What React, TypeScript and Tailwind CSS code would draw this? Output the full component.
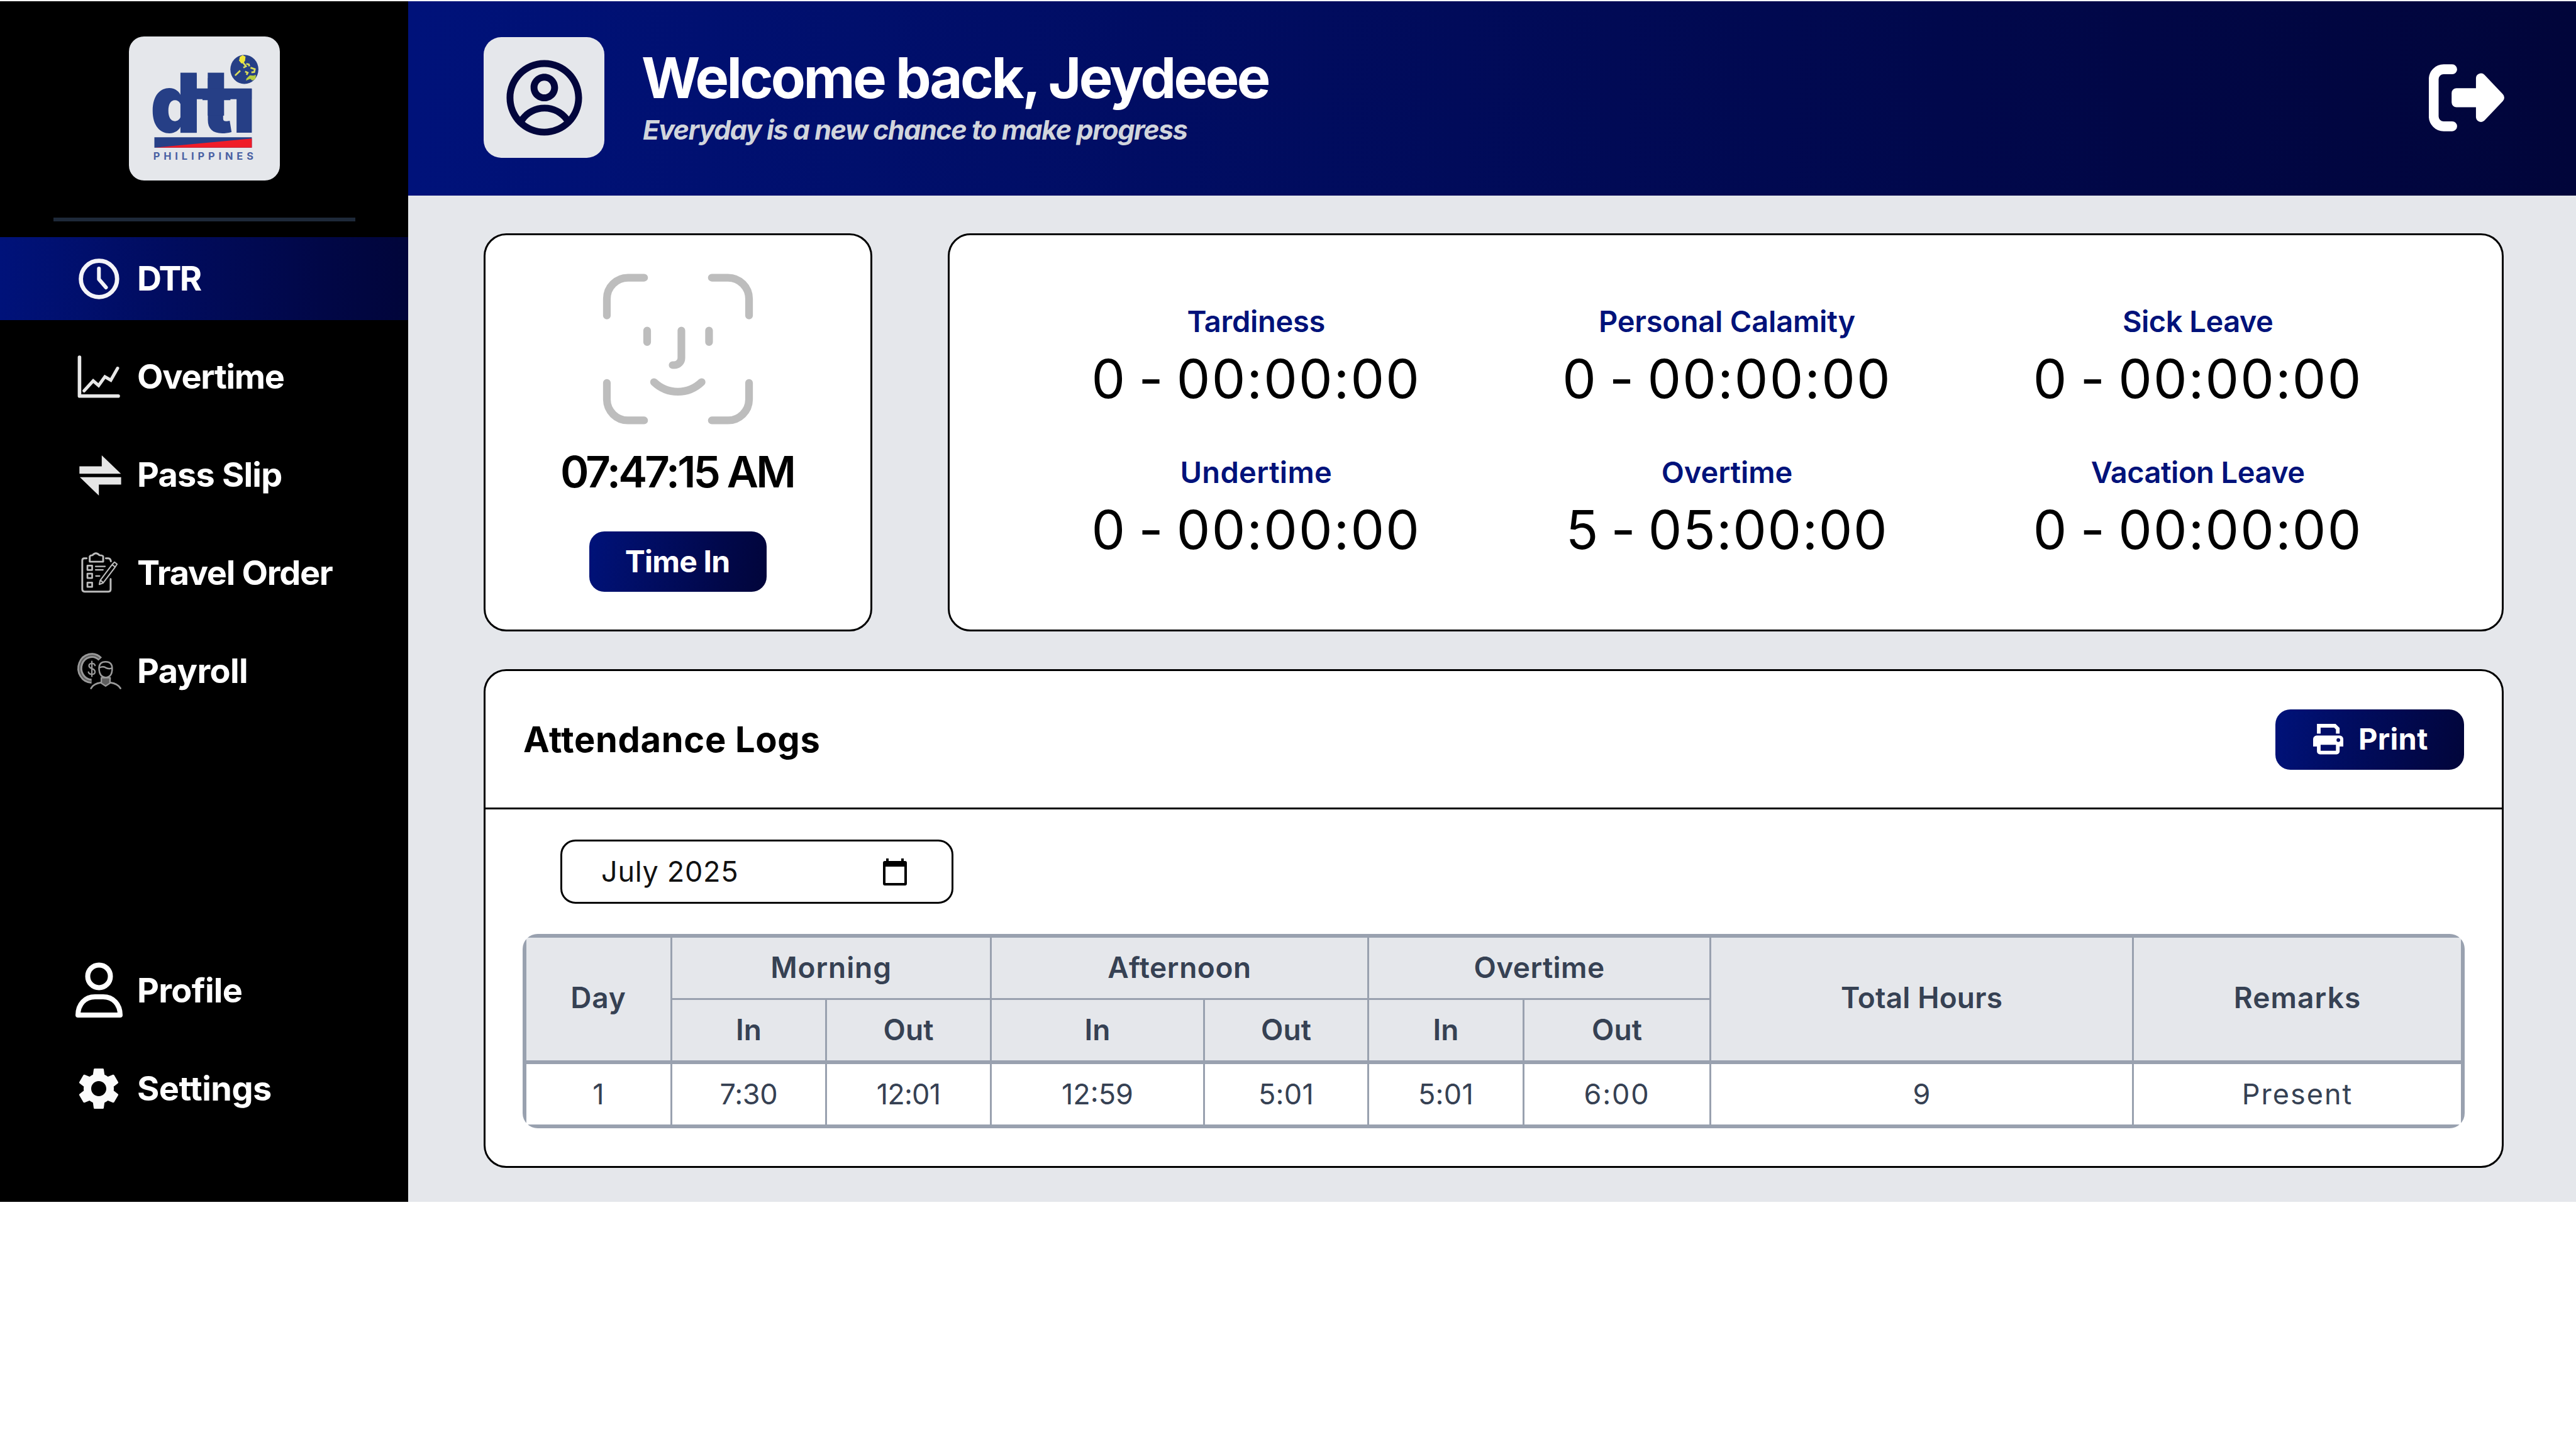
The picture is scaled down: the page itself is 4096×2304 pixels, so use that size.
import React from "react";
import { CgProfile } from "react-icons/cg";
import { MdSettings } from "react-icons/md";

function Logo() {
  return (
    <svg viewBox="0 17 1055 1006" preserveAspectRatio="none" className="h-[229px] w-[240px]" aria-label="DTI Philippines">
      <g fill="#263f86" className="font-[Inter] font-black">
        <text x="150" y="690" fontSize="564" textLength="736" lengthAdjust="spacingAndGlyphs">dti</text>
        <rect x="360" y="270" width="114" height="420" />
        <rect x="551" y="270" width="114" height="300" />
        <rect x="470" y="380" width="388" height="75" />
      </g>
      <ellipse cx="807" cy="247" rx="102" ry="106" fill="#e5e7eb" />
      <ellipse cx="807" cy="247" rx="98" ry="102" fill="#263f86" />
      <path d="M775 160L795 148L815 158L812 185L800 205L785 205L770 185Z" fill="#f0e63a" />
      <path d="M798 200L818 225L800 235M820 208L838 212L842 225M742 290L778 255M850 235L880 245L876 265L856 268M812 262L830 270L822 285" fill="none" stroke="#d9dc5a" strokeWidth="12" />
      <path d="M822 310L845 288L870 290L888 285L884 315L862 324L848 312L818 326Z" fill="#b9cf3f" />
      <rect x="178" y="721" width="681" height="73" fill="#263f86" />
      <path d="M178 794L859 730V794Z" fill="#f01c28" />
      <text x="170" y="878" fontSize="72" textLength="700" lengthAdjust="spacing" fill="#4a61a3" className="font-[Inter] font-bold">PHILIPPINES</text>
    </svg>
  );
}

function IconFrame({ children }: { children: React.ReactNode }) {
  return (
    <svg viewBox="0 0 78 90" className="h-[90px] w-[78px] shrink-0 overflow-visible" fill="none">
      {children}
    </svg>
  );
}

const ClockIcon = () => (
  <IconFrame>
    <g stroke="#f3f3f8" strokeLinecap="round" strokeLinejoin="round">
      <circle cx="39.4" cy="45.5" r="28.8" strokeWidth="6.8" />
      <path d="M39.3 29V46L50.5 59" strokeWidth="6" />
    </g>
  </IconFrame>
);

const ChartIcon = () => (
  <IconFrame>
    <path d="M8.4 14V75.8H70" stroke="#e8e8e8" strokeWidth="5.6" strokeLinecap="round" strokeLinejoin="round" />
    <path d="M15.6 67.5L30.2 51.5L38.8 59L48.8 45L58.2 50.5L69 31.5" stroke="#e8e8e8" strokeWidth="5" strokeLinecap="round" />
  </IconFrame>
);

const SwapIcon = () => (
  <IconFrame>
    <path d="M8.3 31.5H43.8V14L74.3 43.2H8.3ZM9 48.8H74.6V60.5H39.2V78Z" fill="#e6e6e6" />
  </IconFrame>
);

const TravelIcon = () => (
  <IconFrame>
    <g transform="translate(-8.8 -6.8) scale(.2276)" stroke="#bdbdbd" strokeWidth="13" strokeLinecap="round" strokeLinejoin="round">
      <path d="M125 125H110Q95 125 95 140V342Q95 358 111 358H278Q293 358 293 343V270M260 125H276Q292 125 295 146" />
      <path d="M147 149V113Q150 104 166 104Q190 76 215 104Q240 104 241 114V149Z" />
      <rect x="131" y="177" width="33" height="30" strokeWidth="12" />
      <rect x="131" y="233" width="33" height="30" strokeWidth="12" />
      <rect x="131" y="295" width="33" height="30" strokeWidth="12" />
      <path d="M188 182H254M188 206H240M190 249H216" strokeWidth="10" />
      <path d="M303 170L320 152L338 166L325 186M303 170L220 280L214 308L240 298L325 186M303 170L325 186M226 282L240 294" strokeWidth="9" />
    </g>
  </IconFrame>
);

const PayrollIcon = () => (
  <IconFrame>
    <g transform="translate(-8.8 -162.8) scale(.2276)" stroke="#9a9a9a" strokeLinecap="round" strokeLinejoin="round">
      <path d="M220 829A84 90 0 1 0 160 984" strokeWidth="34" strokeLinecap="butt" />
      <path d="M214 824A84 90 0 1 0 158 984" strokeWidth="9" stroke="#5e5e5e" strokeLinecap="butt" />
      <path d="M184 874Q180 860 162 860Q140 861 142 878Q144 890 162 896Q184 903 184 920Q182 936 162 936Q142 935 138 920M162 846V950" strokeWidth="10" />
      <path d="M212 895Q212 848 258 848Q304 848 304 895Q304 955 258 958Q214 955 212 895ZM212 890Q240 878 256 888Q280 902 304 892" strokeWidth="11" fill="#000" />
      <path d="M228 960L290 960L288 998L258 1018L228 998Z" strokeWidth="10" fill="#5e5e5e" />
      <path d="M156 1034Q172 1002 224 994M292 994Q344 1002 362 1034" strokeWidth="12" />
    </g>
  </IconFrame>
);

const PersonIcon = () => (
  <IconFrame>
    <g stroke="#fff" strokeWidth="8">
      <circle cx="39.5" cy="22.4" r="18" />
      <path d="M6 84C6 67 17 55 33 55H46C62 55 73 67 73 84Z" strokeLinejoin="round" />
    </g>
  </IconFrame>
);

const GearIcon = () => (
  <div className="flex h-[90px] w-[78px] shrink-0 items-center justify-center">
    <MdSettings className="size-[80px] shrink-0 text-[#fafafa]" />
  </div>
);

function NavItem({ icon, label, tracking, active }: { icon: React.ReactNode; label: string; tracking: string; active?: boolean }) {
  return (
    <a className={`flex h-[132px] items-center gap-[22px] pl-[118px] ${active ? "bg-linear-to-r from-[#00127a] to-[#01053a]" : ""}`}>
      {icon}
      <span className={`whitespace-nowrap text-[54px] leading-[72px] font-bold text-white ${tracking}`}>{label}</span>
    </a>
  );
}

const stats = [
  { label: "Tardiness", value: "0 - 00:00:00", lt: "tracking-[-0.27px]", vt: "tracking-[2.2px]" },
  { label: "Personal Calamity", value: "0 - 00:00:00", lt: "tracking-[-0.2px]", vt: "tracking-[2.2px]" },
  { label: "Sick Leave", value: "0 - 00:00:00", lt: "tracking-[-0.5px]", vt: "tracking-[2.2px]" },
  { label: "Undertime", value: "0 - 00:00:00", lt: "tracking-[0.3px]", vt: "tracking-[2.2px]" },
  { label: "Overtime", value: "5 - 05:00:00", lt: "tracking-[-0.1px]", vt: "tracking-[1.6px]" },
  { label: "Vacation Leave", value: "0 - 00:00:00", lt: "tracking-[-0.5px]", vt: "tracking-[2.2px]" },
];

const day = [
  ["1", "tracking-normal"],
  ["7:30", "tracking-[-0.3px]"],
  ["12:01", "tracking-[-0.77px]"],
  ["12:59", "tracking-normal"],
  ["5:01", "tracking-[0.26px]"],
  ["5:01", "tracking-[0.26px]"],
  ["6:00", "tracking-[1.9px]"],
  ["9", "tracking-normal"],
  ["Present", "tracking-[2px]"],
];

const line = "border-[#99a1af]";

export default function App() {
  return (
    <div className="h-[2304px] w-[4096px] overflow-hidden bg-white pt-[2px] font-[Inter,sans-serif] text-black">
      <div className="flex h-[1909px] bg-[#e5e7eb]">
        <aside className="flex w-[649px] shrink-0 flex-col bg-black pt-14">
          <div className="mx-auto h-[229px] w-[240px] overflow-hidden rounded-[24px] bg-[#e5e7eb]">
            <Logo />
          </div>
          <div className="mx-auto mt-[59px] h-1.5 w-[480px] bg-[#1e2939]" />
          <nav className="mt-[25px] flex flex-1 flex-col gap-6">
            <NavItem icon={<ClockIcon />} label="DTR" tracking="tracking-[-2.8px]" active />
            <NavItem icon={<ChartIcon />} label="Overtime" tracking="tracking-[-1.3px]" />
            <NavItem icon={<SwapIcon />} label="Pass Slip" tracking="tracking-[-0.8px]" />
            <NavItem icon={<TravelIcon />} label="Travel Order" tracking="tracking-[-1.3px]" />
            <NavItem icon={<PayrollIcon />} label="Payroll" tracking="tracking-[-0.6px]" />
          </nav>
          <div className="mb-[114px] flex flex-col gap-6">
            <NavItem icon={<PersonIcon />} label="Profile" tracking="tracking-[-0.7px]" />
            <NavItem icon={<GearIcon />} label="Settings" tracking="tracking-[-0.5px]" />
          </div>
        </aside>

        <div className="flex min-w-0 flex-1 flex-col">
          <header className="flex h-[309px] shrink-0 items-center bg-linear-to-r from-[#00127a] to-[#01053a] pr-[114px] pb-[3px] pl-[120px]">
            <div className="flex size-48 items-center justify-center rounded-[28px] bg-[#e5e7eb]">
              <CgProfile className="size-[131px] text-[#02063c]" />
            </div>
            <div className="ml-[59px] pb-[5px]">
              <h1 className="text-[90px] leading-[108px] font-bold tracking-[-3.5px] whitespace-nowrap text-white">Welcome back, Jeydeee</h1>
              <p className="pl-[2px] text-[43px] leading-[57px] font-bold tracking-[-1.4px] whitespace-nowrap text-[#d1d5dc] italic">
                Everyday is a new chance to make progress
              </p>
            </div>
            <svg viewBox="0 0 530 473" className="ml-auto h-[107px] w-[120px]">
              <path d="M164 36H104A70 70 0 0 0 34 106V367A70 70 0 0 0 104 437H164" fill="none" stroke="#fff" strokeWidth="69" strokeLinecap="round" />
              <path d="M192 169H331V100A35 35 0 0 1 391 75L520 211A35 35 0 0 1 520 260L391 396A35 35 0 0 1 331 371V303H196A34 34 0 0 1 160 269V203A34 34 0 0 1 196 169Z" fill="#fff" />
            </svg>
          </header>

          <main className="flex flex-1 flex-col gap-15 pt-15 pr-[115px] pl-[120px]">
            <div className="flex h-[633px] gap-[120px]">
              <section className="flex w-[618px] shrink-0 flex-col items-center rounded-[36px] border-3 border-black bg-white pt-[61px]">
                <svg viewBox="0 0 547 551" className="size-60" fill="none" stroke="#bdbdbd" strokeWidth="28" strokeLinecap="round">
                  <path d="M14 153V92A77 77 0 0 1 91 15H150M397 15H456A77 77 0 0 1 533 92V153M14 399V460A77 77 0 0 0 91 536H150M397 536H456A77 77 0 0 0 533 460V399" />
                  <path d="M161 208V250M387 208V250M286 208V308A26 26 0 0 1 260 334H254" />
                  <path d="M186 396C235 443 311 443 360 396" />
                </svg>
                <p className="mt-[33px] pr-[3px] text-[69px] leading-[84px] font-semibold tracking-[-3.8px] whitespace-nowrap">07:47:15 AM</p>
                <button className="mt-[53px] h-24 w-[282px] rounded-[24px] bg-linear-100 from-[#00127a] to-[#01053a] pr-[2px] text-[48px] leading-[60px] font-bold tracking-[-0.8px] text-white">
                  Time In
                </button>
              </section>

              <section className="flex-1 rounded-[36px] border-3 border-black bg-white px-[111px] pt-[95px]">
                <div className="grid grid-cols-3 gap-y-[58px]">
                  {stats.map((s) => (
                    <div key={s.label} className="pl-1 text-center">
                      <h2 className={`text-[47px] leading-[84px] font-semibold text-[#00127a] ${s.lt}`}>{s.label}</h2>
                      <p className={`pt-px text-[85px] leading-[97px] [word-spacing:-7px] ${s.vt}`}>{s.value}</p>
                    </div>
                  ))}
                </div>
              </section>
            </div>

            <section className="h-[793px] rounded-[36px] border-3 border-black bg-white">
              <div className="flex h-[220px] items-center justify-between border-b-3 border-black px-15">
                <h2 className="text-[56px] leading-[72px] font-bold tracking-[0.7px]">Attendance Logs</h2>
                <button className="flex h-24 w-[300px] items-center rounded-[24px] bg-linear-100 from-[#00127a] to-[#01053a] pl-15 text-white">
                  <svg viewBox="25 18 213 217" className="h-[49px] w-[48px]">
                    <path d="M65 87V31H178L199 52V87" fill="none" stroke="#fff" strokeWidth="26" />
                    <path d="M50 100H213A25 25 0 0 1 238 125V178H212V212A21 21 0 0 1 191 233H73A21 21 0 0 1 52 212V178H25V125A25 25 0 0 1 50 100ZM78 165V207H186V165ZM203 119A13 13 0 1 0 203 145A13 13 0 1 0 203 119Z" fill="#fff" fillRule="evenodd" />
                  </svg>
                  <span className="ml-6 pb-[2px] text-[47px] leading-[60px] font-bold tracking-[0.3px]">Print</span>
                </button>
              </div>

              <div className="px-[59px] pt-12">
                <div className="ml-[60px] flex h-[102px] w-[625px] items-center justify-between rounded-[24px] border-3 border-black pr-[71px] pl-[62px]">
                  <span className="text-[45px] leading-[60px] tracking-[0.7px] text-[#111]">July 2025</span>
                  <svg viewBox="0 0 38 43" className="h-[43px] w-[38px]">
                    <path d="M5 0H9V4H29V0H33V4H35A3 3 0 0 1 38 7V40A3 3 0 0 1 35 43H3A3 3 0 0 1 0 40V7A3 3 0 0 1 3 4H5ZM4 13V39H34V13Z" fill="#000" fillRule="evenodd" />
                  </svg>
                </div>

                <div className="mt-12 w-[3088px] overflow-hidden rounded-[24px]">
                  <table className={`w-full table-fixed border-separate border-spacing-0 border-6 text-center text-[#364153] ${line}`}>
                    <colgroup>
                      <col className="w-[232px]" />
                      <col className="w-[246px]" />
                      <col className="w-[262px]" />
                      <col className="w-[339px]" />
                      <col className="w-[261px]" />
                      <col className="w-[247px]" />
                      <col className="w-[297px]" />
                      <col className="w-[672px]" />
                      <col className="w-[520px]" />
                    </colgroup>
                    <thead className="bg-[#e5e7eb] text-[46px] leading-[60px]">
                      <tr className="h-[99px]">
                        <th rowSpan={2} className={`border-r-3 border-b-6 p-0 pb-[5px] font-semibold tracking-[0.86px] ${line}`}>Day</th>
                        <th colSpan={2} className={`border-r-3 border-b-3 p-0 pb-[2px] font-semibold tracking-[0.92px] ${line}`}>Morning</th>
                        <th colSpan={2} className={`border-r-3 border-b-3 p-0 pb-[2px] font-semibold tracking-[0.56px] ${line}`}>Afternoon</th>
                        <th colSpan={2} className={`border-r-3 border-b-3 p-0 pb-[2px] font-semibold tracking-[0.44px] ${line}`}>Overtime</th>
                        <th rowSpan={2} className={`border-r-3 border-b-6 p-0 pb-[5px] font-semibold tracking-[0.17px] ${line}`}>Total Hours</th>
                        <th rowSpan={2} className={`border-b-6 p-0 pb-[5px] font-semibold tracking-[1.1px] ${line}`}>Remarks</th>
                      </tr>
                      <tr className="h-[102px]">
                        {["In", "Out", "In", "Out", "In", "Out"].map((t, i) => (
                          <th key={i} className={`border-r-3 border-b-6 p-0 pb-[2px] font-semibold ${line}`}>{t}</th>
                        ))}
                      </tr>
                    </thead>
                    <tbody>
                      <tr className="h-[96px] text-[45px] leading-[60px]">
                        {day.map(([t, tr], i) => (
                          <td key={i} className={`p-0 ${i < 8 ? "border-r-3" : ""} ${tr} ${line}`}>{t}</td>
                        ))}
                      </tr>
                    </tbody>
                  </table>
                </div>
              </div>
            </section>
          </main>
        </div>
      </div>
    </div>
  );
}
